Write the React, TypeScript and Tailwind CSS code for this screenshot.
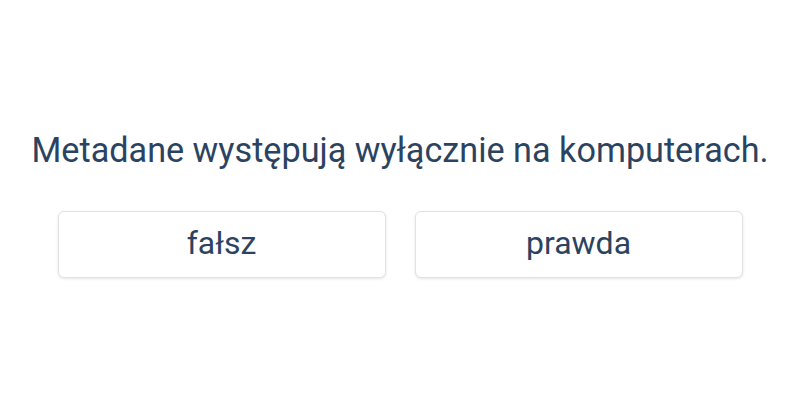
export default function App() {
  return (
    <div className="w-[800px] h-[400px] bg-white flex flex-col items-center pt-[130px] text-[#2b4360] font-['Roboto',sans-serif]">
      <p className="text-[34.2px] leading-[40px]">Metadane występują wyłącznie na komputerach.</p>
      <div className="mt-[41px] flex gap-[29px]">
        <button className="w-[328px] h-[67px] pb-[4px] rounded-[6px] border border-[#e2e2e2] bg-white shadow-[0_1px_3px_rgba(0,0,0,0.10)] text-[32px]">
          fałsz
        </button>
        <button className="w-[328px] h-[67px] pb-[4px] rounded-[6px] border border-[#e2e2e2] bg-white shadow-[0_1px_3px_rgba(0,0,0,0.10)] text-[32px]">
          prawda
        </button>
      </div>
    </div>
  )
}
